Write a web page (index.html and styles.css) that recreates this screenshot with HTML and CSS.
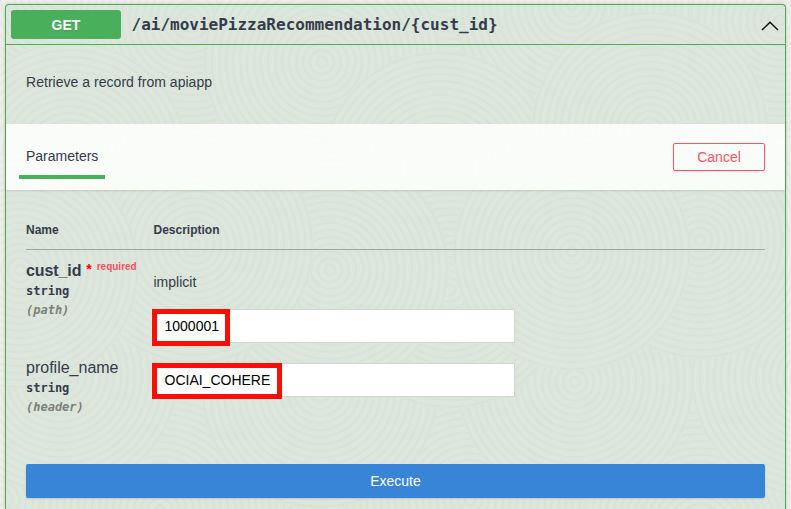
FILE: index.html
```html
<!DOCTYPE html>
<html lang="en">
<head>
<meta charset="utf-8">
<title>API operation</title>
<link rel="stylesheet" href="styles.css">
</head>
<body>
<svg class="texture" width="791" height="509" viewBox="0 0 791 509" aria-hidden="true">
  <defs>
    <radialGradient id="rings" gradientUnits="userSpaceOnUse" cx="0" cy="0" r="7" spreadMethod="repeat">
      <stop offset="0" stop-color="#eeedec"/>
      <stop offset=".4" stop-color="#eeedec"/>
      <stop offset=".7" stop-color="#e9e7e6"/>
      <stop offset="1" stop-color="#eeedec"/>
    </radialGradient>
    <circle id="disc" r="119" fill="url(#rings)"/>
  </defs>
  <use href="#disc" x="60" y="-10"/>
  <use href="#disc" x="450" y="-50"/>
  <use href="#disc" x="190" y="20"/>
  <use href="#disc" x="780" y="20"/>
  <use href="#disc" x="572" y="5"/>
  <use href="#disc" x="322" y="62"/>
  <use href="#disc" x="70" y="160"/>
  <use href="#disc" x="440" y="170"/>
  <use href="#disc" x="650" y="130"/>
  <use href="#disc" x="0" y="500"/>
  <use href="#disc" x="330" y="500"/>
  <use href="#disc" x="470" y="500"/>
  <use href="#disc" x="700" y="530"/>
  <use href="#disc" x="160" y="510"/>
  <use href="#disc" x="320" y="390"/>
  <use href="#disc" x="575" y="382"/>
  <use href="#disc" x="810" y="378"/>
  <use href="#disc" x="60" y="375"/>
  <use href="#disc" x="450" y="290"/>
  <use href="#disc" x="330" y="270"/>
  <use href="#disc" x="700" y="240"/>
  <use href="#disc" x="572" y="252"/>
  <use href="#disc" x="195" y="245"/>
  <use href="#disc" x="20" y="270"/>
</svg>
<main class="operation">
  <header class="summary">
    <span class="method">GET</span>
    <span class="path">/ai/moviePizzaRecommendation/{cust_id}</span>
    <svg class="arrow" width="18" height="10" viewBox="0 0 18 10" aria-hidden="true">
      <path d="M1 9 9 1.2 17 9" fill="none" stroke="#111" stroke-width="1.5"/>
    </svg>
  </header>
  <p class="intro">Retrieve a record from apiapp</p>
  <section class="section-header">
    <h4 class="tab">Parameters</h4>
    <button class="cancel">Cancel</button>
  </section>
  <section class="parameters">
    <div class="row head">
      <span>Name</span>
      <span>Description</span>
    </div>
    <div class="row first">
      <div>
        <div class="name required">cust_id<span class="star">*</span><span class="req">required</span></div>
        <div class="type">string</div>
        <div class="place">(path)</div>
      </div>
      <div>
        <p class="note">implicit</p>
        <div class="field">1000001<i class="mark mark-id"></i></div>
      </div>
    </div>
    <div class="row second">
      <div>
        <div class="name">profile_name</div>
        <div class="type">string</div>
        <div class="place">(header)</div>
      </div>
      <div>
        <div class="field">OCIAI_COHERE<i class="mark mark-profile"></i></div>
      </div>
    </div>
    <button class="execute">Execute</button>
  </section>
</main>
</body>
</html>
```
FILE: styles.css
```css
* { box-sizing: border-box; }
html, body { height: 100%; }
body {
  margin: 0;
  padding: 4px 5px 0;
  overflow: hidden;
  background: #eeedec;
  color: #353b4b;
  font: 14px/16px "Liberation Sans", Arial, sans-serif;
}
p, h4 { margin: 0; font-weight: 400; }
.texture { position: absolute; left: 0; top: 0; }
.operation {
  position: relative;
  width: 781px;
  height: 505px;
  border: 1px solid #49af50;
  border-bottom: 0;
  border-radius: 4px 4px 0 0;
  background: rgba(73, 175, 80, .1);
  box-shadow: 0 0 3px rgba(0, 0, 0, .19);
}
.summary {
  display: flex;
  align-items: center;
  height: 40px;
  padding: 0 6px 0 5px;
  border-bottom: 1px solid #49af50;
}
.method {
  width: 110px;
  height: 29px;
  border-radius: 3px;
  background: #49af5a;
  color: #fff;
  font-size: 14px;
  font-weight: 700;
  line-height: 30px;
  text-align: center;
  text-shadow: 0 1px 0 rgba(0, 0, 0, .1);
}
.path {
  flex: 1;
  padding-left: 10.5px;
  font: 700 16px/20px "DejaVu Sans Mono", monospace;
}
.arrow { margin-top: 2px; }
.intro { height: 79px; padding: 29px 20px 0; letter-spacing: .03px; }
.section-header {
  display: flex;
  justify-content: space-between;
  align-items: center;
  height: 66px;
  padding: 0 20px 0 13px;
  background: rgba(255, 255, 255, .85);
  box-shadow: 0 1px 2px rgba(0, 0, 0, .12);
}
.tab {
  align-self: flex-start;
  width: 86px;
  height: 55px;
  padding: 24px 0 0 7px;
  border-bottom: 4px solid #49af5a;
}
.cancel {
  width: 92px;
  height: 28px;
  padding: 0;
  border: 1px solid #ff5560;
  border-radius: 2px;
  background: transparent;
  box-shadow: 0 1px 2px rgba(0, 0, 0, .1);
  color: #ff5560;
  font: 14px/26px "Liberation Sans", Arial, sans-serif;
}
.parameters { padding: 0 20px; }
.row { display: grid; grid-template-columns: 127px 1fr; }
.head {
  height: 60px;
  padding-top: 32px;
  border-bottom: 1px solid #9ea9a1;
  font-size: 12px;
  font-weight: 700;
}
.head span + span { padding-left: .5px; }
.first { height: 108px; padding-top: 11px; }
.second { height: 106px; }
.second .field { margin-top: 5px; }
.name { height: 20px; font-size: 16px; line-height: 20px; white-space: nowrap; }
.required { font-weight: 700; letter-spacing: -.1px; }
.star { padding-left: 5px; color: #f00; font-size: 14px; vertical-align: 2px; line-height: 1; }
.req {
  padding-left: 5px;
  color: #f3525e;
  font-size: 10px;
  letter-spacing: 0;
  line-height: 1;
  vertical-align: 6px;
}
.type { height: 20px; font: 700 12px/20px "DejaVu Sans Mono", monospace; }
.place { color: #7b7f7c; font: italic 700 12px/19px "DejaVu Sans Mono", monospace; }
.note { height: 48px; padding: 13px 0 0 .5px; }
.field {
  position: relative;
  width: 362px;
  height: 34px;
  padding-left: 10.5px;
  border: 1px solid #d4d5d5;
  background: #fff;
  color: #000;
  line-height: 33px;
}
.mark { position: absolute; left: -2px; top: -1px; border: 5px solid #fc0d05; }
.mark-id { width: 78px; height: 37px; }
.mark-profile { width: 130px; height: 36px; }
.execute {
  display: block;
  width: 739px;
  height: 34px;
  padding: 0;
  border: 0;
  border-radius: 2px;
  background: #3885d8;
  box-shadow: 0 1px 2px rgba(0, 0, 0, .12);
  color: #fff;
  font: 14px/34px "Liberation Sans", Arial, sans-serif;
}
```
